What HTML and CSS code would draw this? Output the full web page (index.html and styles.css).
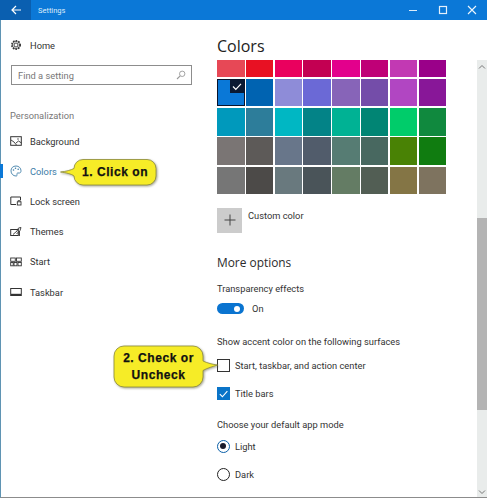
FILE: index.html
```html
<!DOCTYPE html>
<html lang="en">
<head>
<meta charset="utf-8">
<title>Settings</title>
<link rel="stylesheet" href="styles.css">
</head>
<body>
<div class="window">
  <header class="titlebar">
    <div class="back"><svg width="12" height="12" viewBox="0 0 12 12"><path d="M11 6H2M6 2 2 6l4 4" fill="none" stroke="#fff" stroke-width="1.2"/></svg></div>
    <div class="apptitle">Settings</div>
    <div class="controls">
      <svg width="10" height="10" viewBox="0 0 10 10"><path d="M1 5.5h8" stroke="#dcecfa" stroke-width="1"/></svg>
      <svg width="10" height="10" viewBox="0 0 10 10"><rect x="1.5" y="1.5" width="7" height="7" fill="none" stroke="#e4f0fb" stroke-width="1.2"/></svg>
      <svg width="10" height="10" viewBox="0 0 10 10"><path d="M1 1l8 8M9 1 1 9" stroke="#eef6fd" stroke-width="1.1"/></svg>
    </div>
  </header>
  <div class="content">
    <aside class="sidebar">
      <div class="nav-item home">
        <svg class="ico" width="12" height="12" viewBox="0 0 12 12"><circle cx="6" cy="6" r="2" fill="none" stroke="#333" stroke-width=".9"/><circle cx="6" cy="6" r="4.2" fill="none" stroke="#333" stroke-width="1.6" stroke-dasharray="1.6 1.1"/><circle cx="6" cy="6" r="3.6" fill="none" stroke="#333" stroke-width=".7"/></svg>
        <span>Home</span>
      </div>
      <div class="search">
        <span>Find a setting</span>
        <svg width="10" height="10" viewBox="0 0 10 10"><circle cx="6.2" cy="3.8" r="2.7" fill="none" stroke="#999" stroke-width=".9"/><path d="M4.2 5.8 1 9" stroke="#999" stroke-width="1.1"/></svg>
      </div>
      <div class="section">Personalization</div>
      <nav class="nav">
        <div class="nav-item">
          <svg class="ico" width="12" height="12" viewBox="0 0 12 12"><rect x=".7" y="1.7" width="10.6" height="8.6" fill="none" stroke="#333"/><path d="M1 5l3 2 2.5 3M6 8l2.5-2 3 2" fill="none" stroke="#333" stroke-width=".9"/><circle cx="8" cy="4" r=".7" fill="#333"/></svg>
          <span>Background</span>
        </div>
        <div class="nav-item active">
          <svg class="ico" width="12" height="12" viewBox="0 0 12 12"><path d="M6 1C3 1 1 3 1 5.8 1 8.8 3.2 11 6 11c1 0 1.3-.7 1-1.4-.4-.9.1-1.6 1-1.6h1.4C10.500 8 11 7 11 5.800 11 3 8.800 1 6 1Z" fill="none" stroke="#3f7fa8" stroke-width=".9"/><circle cx="3.500" cy="5" r=".8" fill="#3f7fa8"/><circle cx="5.500" cy="3.300" r=".8" fill="#3f7fa8"/><circle cx="8.200" cy="4.300" r=".8" fill="#3f7fa8"/></svg>
          <span>Colors</span>
        </div>
        <div class="nav-item">
          <svg class="ico" width="12" height="12" viewBox="0 0 12 12"><path d="M6 9.500H.8V2h9.700v3" fill="none" stroke="#333"/><rect x="7.300" y="6.800" width="3.700" height="3.200" fill="none" stroke="#333" stroke-width=".9"/><path d="M8 6.800V5.500h2.300v1.300" fill="none" stroke="#333" stroke-width=".7"/></svg>
          <span>Lock screen</span>
        </div>
        <div class="nav-item">
          <svg class="ico" width="12" height="12" viewBox="0 0 12 12"><rect x=".7" y="3.500" width="7.600" height="6" fill="none" stroke="#333"/><path d="M3 8.500 7 5l1.500-3 2.500-.5-1 3-3.500 3.500M9.500 5v5" fill="none" stroke="#333" stroke-width=".9"/></svg>
          <span>Themes</span>
        </div>
        <div class="nav-item">
          <svg class="ico" width="12" height="12" viewBox="0 0 12 12"><rect x=".7" y="2" width="4.600" height="3.300" fill="none" stroke="#333" stroke-width=".9"/><rect x="6.500" y="2" width="4.800" height="3.300" fill="none" stroke="#333" stroke-width=".9"/><rect x=".7" y="6.500" width="2.500" height="3.300" fill="none" stroke="#333" stroke-width=".9"/><rect x="4" y="6.500" width="3" height="3.300" fill="none" stroke="#333" stroke-width=".9"/><rect x="8" y="6.500" width="3.300" height="3.300" fill="none" stroke="#333" stroke-width=".9"/></svg>
          <span>Start</span>
        </div>
        <div class="nav-item">
          <svg class="ico" width="12" height="12" viewBox="0 0 12 12"><rect x=".7" y="2.500" width="10.600" height="7" fill="none" stroke="#333"/><rect x="1" y="7.800" width="10" height="1.600" fill="#333"/></svg>
          <span>Taskbar</span>
        </div>
      </nav>
    </aside>
    <main class="main">
      <h1 class="page-title">Colors</h1>
      <div class="swatches">
        <i class="sw short c1"></i><i class="sw short c2"></i><i class="sw short c3"></i><i class="sw short c4"></i><i class="sw short c5"></i><i class="sw short c6"></i><i class="sw short c7"></i><i class="sw short c8"></i>
        <i class="sw selected c9"><svg class="tick" width="14" height="13" viewBox="0 0 14 13"><path d="M3 6.500 5.800 9.300 11 3.800" fill="none" stroke="#fff" stroke-width="1.200"/></svg></i><i class="sw c10"></i><i class="sw c11"></i><i class="sw c12"></i><i class="sw c13"></i><i class="sw c14"></i><i class="sw c15"></i><i class="sw c16"></i>
        <i class="sw c17"></i><i class="sw c18"></i><i class="sw c19"></i><i class="sw c20"></i><i class="sw c21"></i><i class="sw c22"></i><i class="sw c23"></i><i class="sw c24"></i>
        <i class="sw c25"></i><i class="sw c26"></i><i class="sw c27"></i><i class="sw c28"></i><i class="sw c29"></i><i class="sw c30"></i><i class="sw c31"></i><i class="sw c32"></i>
        <i class="sw c33"></i><i class="sw c34"></i><i class="sw c35"></i><i class="sw c36"></i><i class="sw c37"></i><i class="sw c38"></i><i class="sw c39"></i><i class="sw c40"></i>
      </div>
      <div class="custom">
        <div class="plus"><svg width="12" height="12" viewBox="0 0 12 12"><path d="M6 .5v11M.5 6h11" stroke="#444" stroke-width="1"/></svg></div>
        <span>Custom color</span>
      </div>
      <h2 class="subhead">More options</h2>
      <div class="label">Transparency effects</div>
      <div class="toggle-row"><span class="toggle"></span><span>On</span></div>
      <div class="label accent">Show accent color on the following surfaces</div>
      <div class="check-row first"><span class="box"></span><span>Start, taskbar, and action center</span></div>
      <div class="check-row second"><span class="box on"><svg width="12" height="12" viewBox="0 0 12 12"><path d="M2 6.200 4.800 9 10.200 2.800" fill="none" stroke="#fff" stroke-width="1.200"/></svg></span><span>Title bars</span></div>
      <div class="label mode">Choose your default app mode</div>
      <div class="radio-row r1"><span class="radio on"></span><span>Light</span></div>
      <div class="radio-row r2"><span class="radio"></span><span>Dark</span></div>
    </main>
    <div class="scrollbar">
      <svg class="arrow" width="8" height="6" viewBox="0 0 8 6"><path d="M1 4.500 4 1.500l3 3" fill="none" stroke="#777" stroke-width="1"/></svg>
      <div class="thumb"></div>
      <svg class="arrow" width="8" height="6" viewBox="0 0 8 6"><path d="M1 1.500 4 4.500l3-3" fill="none" stroke="#777" stroke-width="1"/></svg>
    </div>
  </div>
</div>
<div class="callout one">
  <svg class="bubble" width="98" height="30" viewBox="0 0 98 30"><path d="M24 1.500H88a9 9 0 0 1 9 9V18a9 9 0 0 1-9 9H24a9 9 0 0 1-9-9C13 16 6 14.500 1.500 14 7 13.500 12 12 15 10.500a9 9 0 0 1 9-9Z" fill="#f6ec27" stroke="#8b8a3a" stroke-width=".8"/></svg>
  <span>1. Click on</span>
</div>
<div class="callout two">
  <svg class="bubble" width="106" height="45" viewBox="0 0 106 45"><path d="M11 1H80a10 10 0 0 1 10 10v5C94 18 100 19.500 104.500 20 100 21.500 94 23 90 25.500V32a10 10 0 0 1-10 10H11A10 10 0 0 1 1 32V11A10 10 0 0 1 11 1Z" fill="#f6ec27" stroke="#8b8a3a" stroke-width=".8"/></svg>
  <span>2. Check or<br>Uncheck</span>
</div>
</body>
</html>
```
FILE: styles.css
```css
* { box-sizing: border-box; }
html, body { margin: 0; padding: 0; }
body {
  width: 487px; height: 500px; position: relative; overflow: hidden; background: #fff;
  font-family: Roboto, "Noto Sans", sans-serif; font-size: 9.300px; color: #333;
}
.window {
  width: 487px; height: 498px; display: flex; flex-direction: column;
  border-left: 1px solid #5f94b3; border-bottom: 1px solid #8c8c8c;
}
.titlebar { height: 20px; margin-left: -1px; background: #0b78d7; display: flex; align-items: center; color: #fff; flex: none; }
.back { width: 31px; height: 20px; background: #0a5fb0; display: flex; align-items: center; justify-content: center; }
.apptitle { margin-left: 7px; font-size: 7.500px; color: #dcecfa; }
.controls { margin-left: auto; display: flex; gap: 19.500px; padding-right: 10px; }
.content { flex: 1; display: flex; min-height: 0; }
.sidebar { width: 205px; flex: none; padding-top: 15px; }
.nav-item { height: 30.200px; display: flex; align-items: center; gap: 8px; padding-left: 9px; position: relative; }
.nav-item.home { height: 20px; }
.nav-item.active { color: #3b7ca8; }
.nav-item.active::before { content: ""; position: absolute; left: -1px; top: 8px; width: 3px; height: 14px; background: #0b78d7; }
.ico { flex: none; }
.search {
  margin: 10px 0 0 10px; width: 181px; height: 20px; border: 1.500px solid #8d8d8d; display: flex; align-items: center;
  justify-content: space-between; padding: 0 5px 0 6px; color: #777;
}
.section { margin: 24px 0 0 9px; color: #777; height: 14px; line-height: 14px; }
.nav { margin-top: 3px; }
.main { flex: 1; padding: 0 0 0 11px; min-width: 0; }
.page-title { margin: 13px 0 0; font-family: "Open Sans", sans-serif; font-size: 16px; font-weight: 400; line-height: 26px; color: #222; height: 27px; }
.swatches { display: grid; grid-template-columns: repeat(8, 27.500px); column-gap: 1.300px; row-gap: 1.800px; margin-top: 0; }
.sw { display: block; height: 27.500px; position: relative; }
.sw.short { height: 17px; }
.selected { border: 1.500px solid #08142c; }
.tick { position: absolute; right: 0; top: 0; background: #0a1a33; }
.c1{background:#e74856}.c2{background:#e81123}.c3{background:#ea005e}.c4{background:#c30052}.c5{background:#e3008c}.c6{background:#bf0077}.c7{background:#c239b3}.c8{background:#9a0089}
.c9{background:#0a78d7}.c10{background:#0063b1}.c11{background:#8e8cd8}.c12{background:#6b69d6}.c13{background:#8764b8}.c14{background:#744da9}.c15{background:#b146c2}.c16{background:#881798}
.c17{background:#0099bc}.c18{background:#2d7d9a}.c19{background:#00b7c3}.c20{background:#038387}.c21{background:#00b294}.c22{background:#018574}.c23{background:#00cc6a}.c24{background:#10893e}
.c25{background:#7a7574}.c26{background:#5d5a58}.c27{background:#68768a}.c28{background:#515c6b}.c29{background:#567c73}.c30{background:#486860}.c31{background:#498205}.c32{background:#107c10}
.c33{background:#767676}.c34{background:#4c4a48}.c35{background:#69797e}.c36{background:#4a5459}.c37{background:#647c64}.c38{background:#525e54}.c39{background:#847545}.c40{background:#7e735f}
.custom { display: flex; align-items: flex-start; gap: 6px; margin-top: 13.500px; height: 25px; }
.custom span { line-height: 13px; margin-top: 1px; }
.plus { width: 25px; height: 25px; background: #ccc; display: flex; align-items: center; justify-content: center; }
.subhead { margin: 21px 0 0; font-family: "Open Sans", sans-serif; font-size: 11.900px; font-weight: 400; line-height: 17px; color: #2b2b2b; }
.label { line-height: 14px; height: 14px; }
.subhead + .label { margin-top: 11px; }
.toggle-row { display: flex; align-items: center; gap: 8px; margin-top: 6px; height: 14px; }
.toggle { width: 27px; height: 11px; border-radius: 6px; background: #0a74d0; position: relative; }
.toggle::after { content: ""; position: absolute; right: 4px; top: 2.500px; width: 6px; height: 6px; border-radius: 50%; background: #fff; }
.accent { margin-top: 19px; }
.check-row { display: flex; align-items: center; gap: 5px; height: 14px; }
.first { margin-top: 10px; }
.second { margin-top: 14px; }
.box { width: 13px; height: 13px; border: 1.300px solid #333; display: flex; align-items: center; justify-content: center; flex: none; }
.box.on { background: #0a74c8; border-color: #0a74c8; }
.mode { margin-top: 17px; }
.radio-row { display: flex; align-items: center; gap: 5px; height: 14px; }
.r1 { margin-top: 8px; }
.r2 { margin-top: 14px; }
.radio { width: 13px; height: 13px; border: 1.300px solid #222; border-radius: 50%; flex: none; position: relative; }
.radio.on { border-color: #0a5fa8; }
.radio.on::after { content: ""; position: absolute; left: 2.200px; top: 2.200px; width: 6px; height: 6px; border-radius: 50%; background: #1a1a2a; }
.scrollbar { width: 10px; flex: none; margin-top: 40px; background: #e9eceb; display: flex; flex-direction: column; align-items: center; justify-content: space-between; padding: 4px 0 2px; position: relative; }
.thumb { position: absolute; left: 0; right: 0; top: 158px; height: 192px; background: #b4b4b4; }
.callout { position: absolute; font-family: "Liberation Sans", Arial, sans-serif; font-weight: 700; font-size: 12px; color: #111; text-align: center; letter-spacing: .55px; -webkit-text-stroke: .25px #111; }
.bubble { position: absolute; left: 0; top: 0; filter: drop-shadow(1px 1.500px 1px rgba(90,90,60,.55)); }
.callout span { position: relative; display: block; }
.one { left: 59px; top: 158px; width: 98px; height: 30px; }
.one span { padding-left: 14px; line-height: 27px; margin-top: 1px; }
.two { left: 113px; top: 345px; width: 106px; height: 45px; }
.two span { width: 91px; line-height: 16.500px; padding-top: 5px; }
```
